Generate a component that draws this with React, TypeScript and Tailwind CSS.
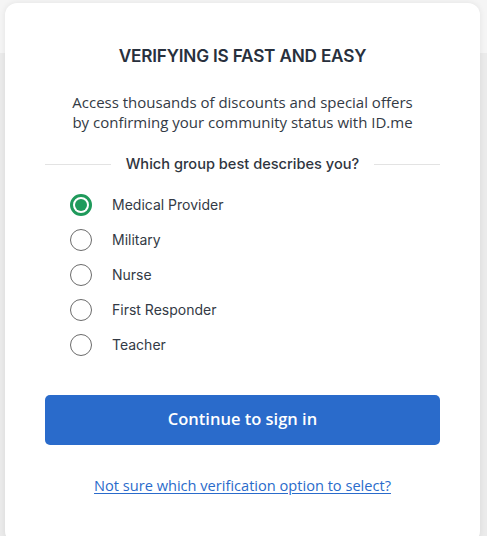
import React, { useState } from 'react';

const groups = ['Medical Provider', 'Military', 'Nurse', 'First Responder', 'Teacher'];

export default function App() {
  const [selected, setSelected] = useState('Medical Provider');

  return (
    <div className="h-[536px] w-[487px] overflow-hidden bg-[#ebebeb]">
      <div className="h-[53px] bg-[#f5f5f5]" />
      <div className="-mt-[50px] ml-[5px] mr-[7px] h-[540px] rounded-[12px] bg-white shadow-[0_0_6px_rgba(0,0,0,0.08)] px-[40px] pt-[40px]">
        <h1 className="text-center font-['Inter',sans-serif] text-[17.2px] font-semibold tracking-[-0.2px] text-[#28303d]">
          VERIFYING IS FAST AND EASY
        </h1>

        <p className="mt-[23px] text-center font-['Open_Sans',sans-serif] text-[15px] leading-[20px] text-[#333a45]">
          Access thousands of discounts and special offers
          <br />
          by confirming your community status with ID.me
        </p>

        <div className="mt-[22px] flex items-center gap-[15px]">
          <div className="h-px flex-1 bg-[#e3e3e3]" />
          <span className="font-['Inter',sans-serif] text-[14.6px] font-medium text-[#2f3540]">
            Which group best describes you?
          </span>
          <div className="h-px flex-1 bg-[#e3e3e3]" />
        </div>

        <div className="mt-[18px] flex flex-col gap-[13px] pl-[25px]">
          {groups.map((g) => {
            const active = g === selected;
            return (
              <label
                key={g}
                onClick={() => setSelected(g)}
                className="flex h-[22px] cursor-pointer items-center gap-[20px]"
              >
                {active ? (
                  <span className="flex h-[22px] w-[22px] items-center justify-center rounded-full border-[3px] border-[#1f9a5b]">
                    <span className="h-[12px] w-[12px] rounded-full bg-[#1f9a5b]" />
                  </span>
                ) : (
                  <span className="h-[22px] w-[22px] rounded-full border border-[#6b6b6b]" />
                )}
                <span className="font-['Inter',sans-serif] text-[14px] text-[#333a45]">{g}</span>
              </label>
            );
          })}
        </div>

        <button className="mt-[39px] h-[50px] w-full rounded-[5px] bg-[#2a6bcb] font-['Open_Sans',sans-serif] text-[16.5px] font-semibold text-white">
          Continue to sign in
        </button>

        <div className="mt-[28px] text-center">
          <a
            href="#"
            className="font-['Open_Sans',sans-serif] text-[14.6px] text-[#2a6bcb] underline underline-offset-2"
          >
            Not sure which verification option to select?
          </a>
        </div>
      </div>
    </div>
  );
}
